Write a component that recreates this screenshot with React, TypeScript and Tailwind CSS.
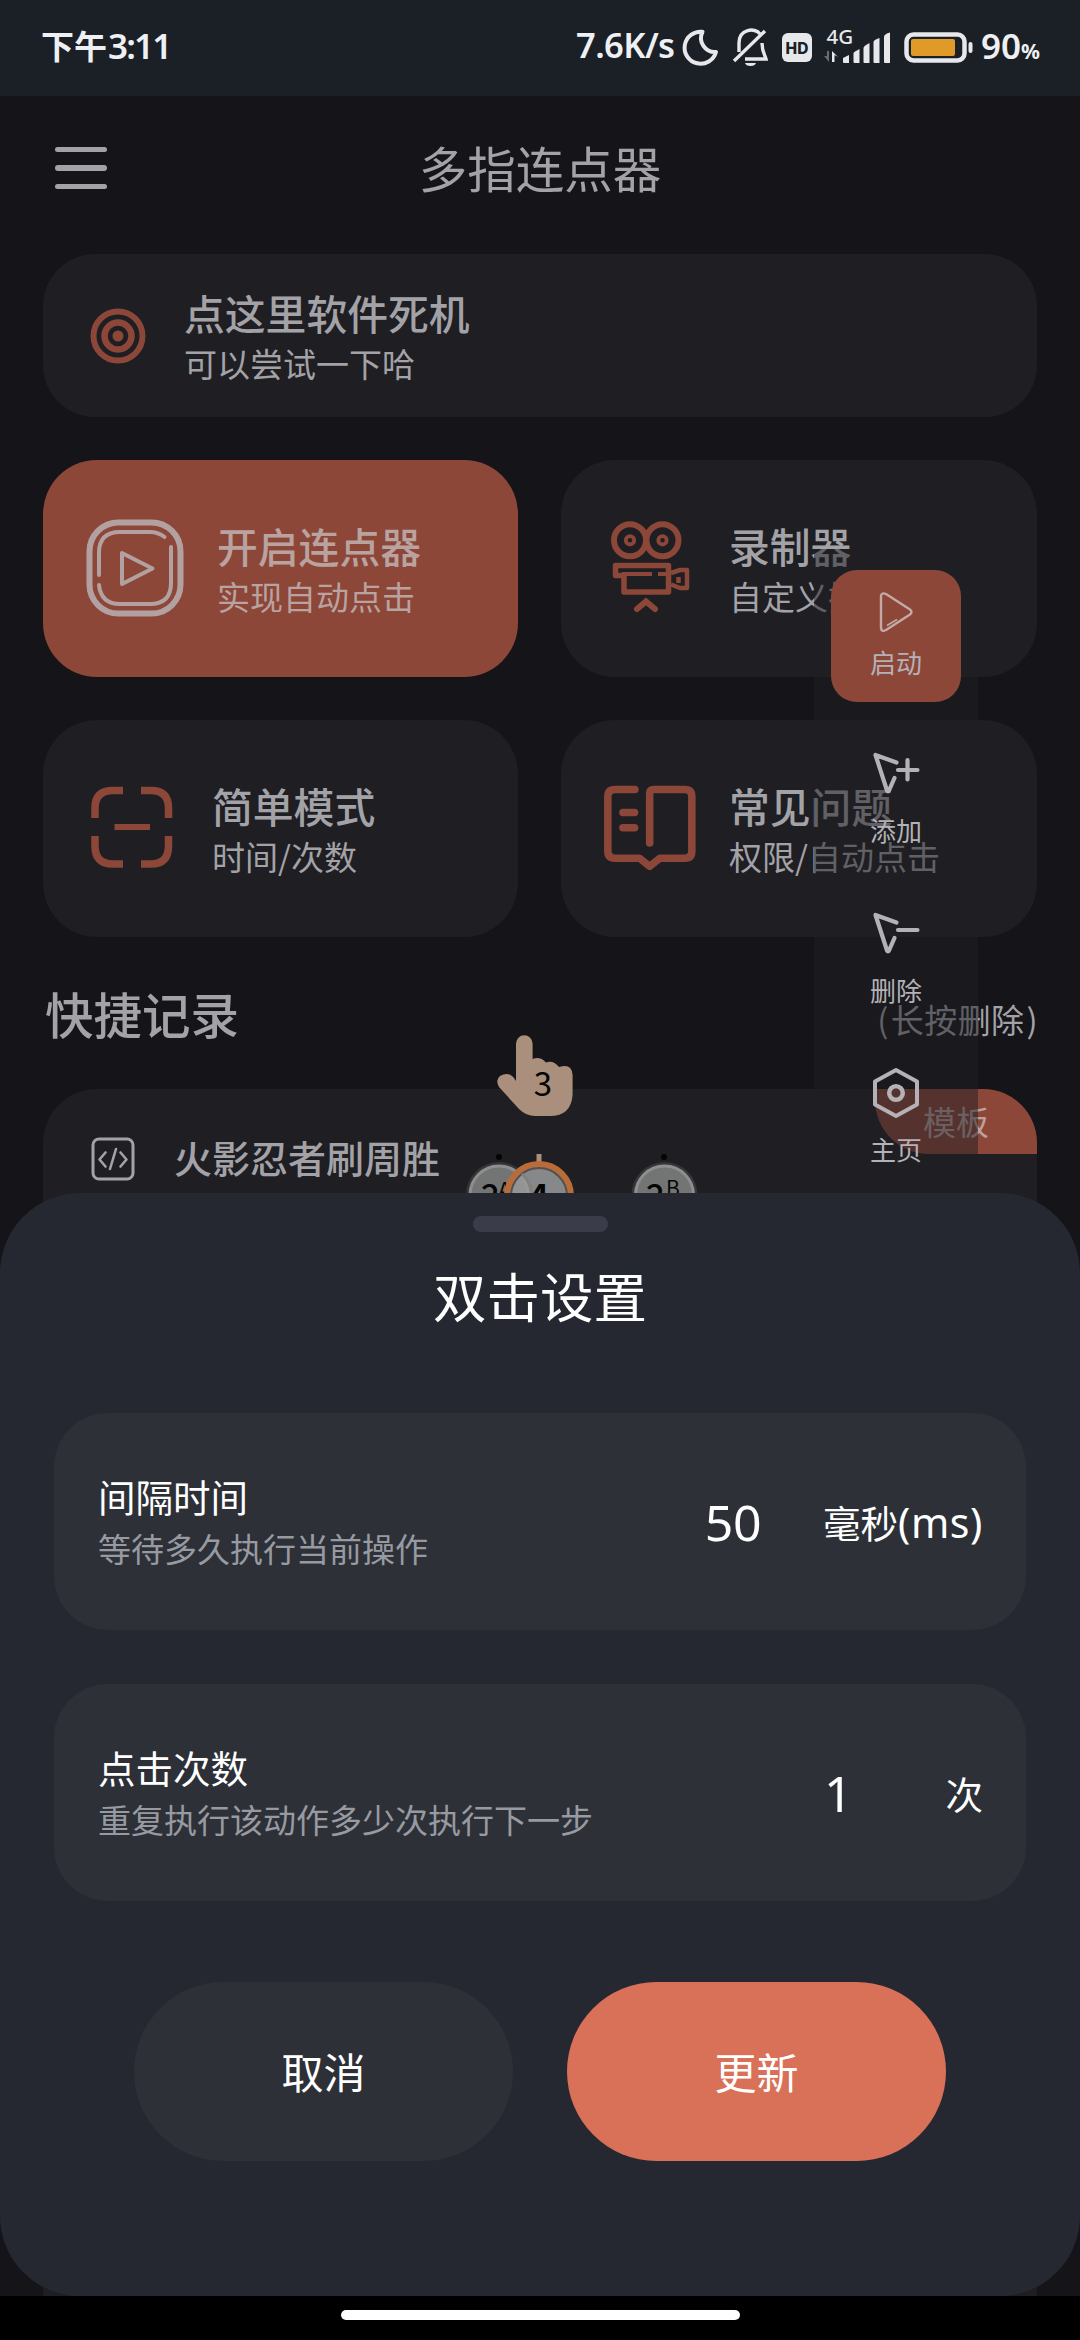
import React from "react";

const ACCENT = "#8c4739";
const MUTED = "#a3a2a7";

function StatusBar() {
  return (
    <div className="flex h-24 items-center bg-[#1b1f26] pl-[41px] text-[#eef0f3]">
      <div className="-mt-[6px] flex h-[50px] w-[535px] items-center text-[33px] leading-none">
        <span className="font-bold">下午</span>
        <span className="ml-px font-['Noto_Sans'] text-[35px] font-semibold tracking-[-1.8px]">3:11</span>
      </div>
      <div className="-mt-[6px] w-[102px] font-['Noto_Sans'] text-[34.5px] leading-none font-semibold tracking-[-0.6px] whitespace-nowrap">7.6K/s</div>
      <svg className="-mt-[3px] h-[60px] w-[300px] shrink-0" viewBox="678 15 300 60" fill="none" stroke="#e6e8eb" strokeWidth="4">
        <path d="M702.500 29.800A16 16 0 1 0 716 50A14 14 0 0 1 702.500 29.800Z" strokeLinejoin="round" />
        <g strokeWidth="3.400">
          <path d="M734 59L765 29" />
          <path d="M739 50V41C739 27 755 25 760 32" />
          <path d="M762 41C762 50 765 53 766 57H745" />
        </g>
        <path d="M745 61H756Q755 64 750.500 64Q746 64 745 61Z" fill="#e6e8eb" stroke="none" />
        <rect x="782" y="31" width="30" height="29" rx="6" fill="#e6e8eb" stroke="none" />
        <text x="797" y="51.500" fill="#1b1f26" stroke="none" fontFamily="Inter" fontWeight="800" fontSize="15.500" textAnchor="middle">HD</text>
        <text x="826.500" y="41.500" fill="#e6e8eb" stroke="none" fontFamily="Noto Sans" fontWeight="500" fontSize="20.500">4G</text>
        <g fill="#e6e8eb" stroke="none">
          <path d="M824 54L829 60V49H827V54Z" fill="#686b70" />
          <path d="M832 49V60H834.500V53L838 55Z" />
          <path d="M843 56L849 53V61H844Q843 61 843 60Z" />
          <path d="M853.500 51Q853.500 50 859.500 47V61H854.500Q853.500 61 853.500 60Z" />
          <path d="M863.500 46Q863.500 44 869.500 41V61H864.500Q863.500 61 863.500 60Z" />
          <path d="M873.500 40Q873.500 38 879.500 36V61H874.500Q873.500 61 873.500 60Z" />
          <path d="M884 35Q884 32 890 30.500V61H885Q884 61 884 60Z" />
        </g>
        <rect x="906.500" y="32.500" width="58" height="26" rx="7" strokeWidth="4.500" />
        <rect x="911" y="37" width="44" height="17" rx="2" fill="#df9a27" stroke="none" />
        <path d="M970.500 42V49" strokeWidth="4" strokeLinecap="round" />
      </svg>
      <div className="-mt-[6px] ml-[3px] flex items-baseline font-['Noto_Sans'] text-[35px] leading-none font-semibold">
        90<span className="text-[21px] font-bold">%</span>
      </div>
    </div>
  );
}

function TwoLine({ title, sub }: { title: string; sub: string }) {
  return (
    <div className="flex flex-col pt-[4px] whitespace-nowrap">
      <span className="h-[50px] text-[40.8px] leading-[50px] font-medium">{title}</span>
      <span className="h-[50px] text-[33px] leading-[50px]">{sub}</span>
    </div>
  );
}

function TargetIcon() {
  return (
    <svg className="h-14 w-14" viewBox="-28 -28 56 56" fill="none" stroke={ACCENT} strokeWidth="6">
      <circle r="24.500" />
      <circle r="13.500" strokeWidth="6.500" />
      <circle r="5.500" fill={ACCENT} stroke="none" />
    </svg>
  );
}

function PlayBoxIcon() {
  return (
    <svg className="-mt-px h-[98px] w-[98px]" viewBox="86 519 98 98" fill="none" stroke="#b3a0a0" strokeLinecap="round">
      <rect x="89.500" y="522.500" width="91" height="91" rx="29" strokeWidth="6" />
      <path d="M99 575V553Q99 532 120 532H150Q158 532 164.500 537M171 547V583Q171 604 150 604H120Q101 604 99 585" strokeWidth="4" />
      <path d="M122 553V584L152.500 568.500Z" strokeWidth="4" strokeLinejoin="round" />
    </svg>
  );
}

function CameraIcon() {
  return (
    <svg className="-mt-px h-[98px] w-[82px]" viewBox="608 521 82 98" fill="none" stroke={ACCENT} strokeWidth="6">
      <circle cx="630" cy="542.300" r="16" />
      <circle cx="662.500" cy="542.300" r="16" />
      <circle cx="630" cy="542.300" r="4.200" strokeWidth="3.800" />
      <circle cx="662.500" cy="542.300" r="4.200" strokeWidth="3.800" />
      <path d="M615.500 567.500H668.500V594H624V577.500H615.500Z" strokeWidth="5.500" strokeLinejoin="round" />
      <path d="M622 576H652M658 576H668" strokeWidth="4" />
      <path d="M671 575L680 572H687V590H680L671 586.500M678.500 579V585" strokeWidth="4.500" strokeLinejoin="round" />
      <path d="M637 611L646 603.500L655 611" strokeLinecap="round" />
    </svg>
  );
}

function ScanIcon() {
  return (
    <svg className="-mt-[3px] h-[82px] w-[82px]" viewBox="0 0 82 82" fill="none" stroke={ACCENT} strokeWidth="7.500">
      <path d="M4 32V22Q4 4.500 22 4.500H32M50 4.500H60Q77.500 4.500 77.500 22V32M77.500 50V60Q77.500 78 60 78H50M32 78H22Q4 78 4 60V50" />
      <path d="M23.500 41H59" strokeWidth="6" />
    </svg>
  );
}

function BookIcon() {
  return (
    <svg className="-mt-px h-[88px] w-[96px]" viewBox="180 244 280 256" fill="none" stroke={ACCENT} strokeWidth="22" strokeLinecap="round" strokeLinejoin="round">
      <path d="M276 260H218Q197 260 197 281V440Q197 460 218 460H289L319 484L349 460H422Q442 460 442 440V281Q442 260 422 260H331Q319 260 319 272V416" />
      <path d="M241 327H275M241 371H275" />
    </svg>
  );
}

function CodeIcon() {
  return (
    <svg className="h-11 w-11" viewBox="0 0 44 44" fill="none" stroke={MUTED} strokeWidth="3" strokeLinecap="round" strokeLinejoin="round">
      <rect x="2" y="2" width="40" height="40" rx="6" />
      <path d="M14.500 15.500L8.500 22.500L14.500 29.500M29.500 15.500L35.500 22.500L29.500 29.500M25 12L19 32" strokeWidth="2.600" />
    </svg>
  );
}

function CursorIcon({ plus }: { plus?: boolean }) {
  return (
    <svg className="h-11 w-12" viewBox="0 0 48 44" fill="none" stroke="#b4b2b6" strokeWidth="4.200" strokeLinecap="round" strokeLinejoin="round">
      <path d="M24.500 11.500L3.500 4L15 39.500Q16 41.500 17 39.500L22.500 27" />
      <path d={plus ? "M26 19H45.500M35.500 9V28.500" : "M26 19H45.500"} />
    </svg>
  );
}

function Card({ left, className, children }: { left?: boolean; className?: string; children: React.ReactNode }) {
  return (
    <div className={`flex h-[217px] items-center rounded-[54px] ${left ? "w-[475px]" : "w-[476px]"} ${className ?? "bg-[#1e1e23]"}`}>
      {children}
    </div>
  );
}

function FloatingPanel() {
  return (
    <div className="absolute top-[549px] left-[814px] flex h-[660px] w-[164px] flex-col items-center bg-[#1e1e23]/50 pt-[21px] text-[26px] leading-[30px] text-[#b4b2b6]">
      <div className="flex h-[132px] w-[130px] flex-col items-center rounded-[26px] bg-[#8c4739] pt-[21px]">
        <svg className="h-[42px] w-9" viewBox="0 0 36 42" fill="none" stroke="#c3aaa5" strokeWidth="2.400" strokeLinejoin="round">
          <path d="M3 5V37Q3.500 41.500 8 39L32 23.500Q35 21 32 18.500L8 3Q3.500 1 3 5Z" />
          <path d="M9 34.500L19 28.500" strokeWidth="1.500" />
        </svg>
        <span className="mt-[14px]">启动</span>
      </div>
      <div className="mt-[49px] flex flex-col items-center">
        <CursorIcon plus />
        <span className="mt-[20px]">添加</span>
      </div>
      <div className="mt-[66px] flex flex-col items-center">
        <CursorIcon />
        <span className="mt-[20px]">删除</span>
      </div>
      <div className="mt-[62px] flex flex-col items-center">
        <svg className="h-[52px] w-12" viewBox="0 0 48 52" fill="none" stroke="#b4b2b6" strokeWidth="4" strokeLinejoin="round">
          <path d="M24 3L45 14.500V37.500L24 49L3 37.500V14.500Z" />
          <circle cx="24" cy="26" r="6.800" strokeWidth="4.500" />
        </svg>
        <span className="mt-[15px]">主页</span>
      </div>
    </div>
  );
}

function Markers() {
  return (
    <svg className="absolute top-[1020px] left-[450px] h-[180px] w-[260px]" viewBox="450 1020 260 180" fontFamily="Noto Sans CJK SC, sans-serif" fill="#050505">
      <path
        d="M516 1081V1043.500A8.300 8.300 0 0 1 532.600 1043.500V1059Q540 1056 546 1062.500Q553 1059.500 559 1067Q572 1063 572.600 1075V1095Q571 1116 550 1116H535Q526 1116 519 1109L499 1087Q495 1080 500 1076Q510 1070 516 1081Z"
        fill="#a98f7c"
      />
      <text x="543" y="1096" fontSize="33" textAnchor="middle">3</text>
      <circle cx="499" cy="1157" r="3" />
      <circle cx="499" cy="1195" r="33" fill="#35363a" />
      <circle cx="499" cy="1195" r="29" fill="#737574" stroke="#8d8f8f" strokeWidth="3" />
      <text x="481" y="1208" fontSize="33" fontWeight="500">2</text>
      <text x="498" y="1198" fontSize="22">A</text>
      <path d="M539 1154V1162" stroke="#a98f7c" strokeWidth="5" />
      <circle cx="539" cy="1196" r="32" fill="#999b9b" fillOpacity=".85" stroke="#b96c37" strokeWidth="6" />
      <circle cx="539" cy="1196" r="28" fill="none" stroke="#55504d" strokeWidth="2" />
      <path d="M522 1174Q530 1181 532 1193" fill="none" stroke="#808282" strokeWidth="3" />
      <text x="539" y="1208" fontSize="33" fontWeight="700" textAnchor="middle">4</text>
      <circle cx="664" cy="1157" r="3" />
      <circle cx="664.500" cy="1195" r="33" fill="#35363a" />
      <circle cx="664.500" cy="1195" r="29" fill="#737574" stroke="#8d8f8f" strokeWidth="3" />
      <text x="646" y="1208" fontSize="33" fontWeight="500">2</text>
      <text x="666" y="1196" fontSize="21">B</text>
    </svg>
  );
}

function SettingRow({ title, sub, value, unit, suffix, valueClass }: { title: string; sub: string; value: string; unit: string; suffix?: string; valueClass: string }) {
  return (
    <div className="flex h-[217px] items-center rounded-[54px] bg-[#2d3037] px-11 whitespace-nowrap">
      <div className="mt-px flex flex-col">
        <span className="h-[53px] text-[37.5px] leading-[53px]">{title}</span>
        <span className="h-[53px] text-[33px] leading-[53px] text-[#979aa1]">{sub}</span>
      </div>
      <span className={`ml-auto text-center font-['Noto_Sans'] text-[50px] leading-[60px] ${valueClass}`}>{value}</span>
      <div className="-mr-px flex items-baseline text-[37.5px] leading-[60px]">
        {unit}
        {suffix && <span className="font-['Noto_Sans'] text-[41px] tracking-[0.6px]">{suffix}</span>}
      </div>
    </div>
  );
}

function SettingsSheet() {
  return (
    <div className="absolute top-[1193px] left-0 flex h-[1103px] w-[1080px] flex-col items-center rounded-[80px] bg-[#252831] pt-[23px] text-white">
      <div className="h-4 w-[135px] rounded-lg bg-[#3b3c49]" />
      <h2 className="mt-[31px] text-[53.5px] leading-[64px]">双击设置</h2>
      <div className="mt-[86px] flex w-[972px] flex-col gap-[54px]">
        <SettingRow title="间隔时间" sub="等待多久执行当前操作" value="50" unit="毫秒" suffix="(ms)" valueClass="mr-[62px] tracking-[-0.5px]" />
        <SettingRow title="点击次数" sub="重复执行该动作多少次执行下一步" value="1" unit="次" valueClass="mr-[93px]" />
      </div>
      <div className="mt-[81px] flex gap-[54px] text-[42px]">
        <button className="h-[179px] w-[379px] rounded-full bg-[#2d3037] pb-[2px]">取消</button>
        <button className="h-[179px] w-[379px] rounded-full bg-[#d97058] pb-[2px]">更新</button>
      </div>
    </div>
  );
}

export default function App() {
  return (
    <div className="relative flex h-[2340px] w-[1080px] flex-col overflow-hidden bg-[#141419] font-['Noto_Sans_CJK_SC',sans-serif] text-[#a3a2a7] antialiased">
      <StatusBar />
      <header className="flex h-[158px] items-center pb-[14px]">
        <div className="ml-[55px] flex w-[52px] flex-col gap-[13px]">
          <i className="h-[5.5px] rounded-full bg-[#a3a2a7]" />
          <i className="h-[5.5px] rounded-full bg-[#a3a2a7]" />
          <i className="h-[5.5px] rounded-full bg-[#a3a2a7]" />
        </div>
        <h1 className="mr-[107px] flex-1 pb-[2px] text-center text-[48.5px] leading-[60px]">多指连点器</h1>
      </header>
      <main className="flex flex-col px-[43px]">
        <div className="flex h-[163px] items-center rounded-[52px] bg-[#1e1e23] pl-[47px]">
          <TargetIcon />
          <div className="ml-[38px]">
            <TwoLine title="点这里软件死机" sub="可以尝试一下哈" />
          </div>
        </div>
        <div className="mt-[43px] grid grid-cols-[475px_476px] gap-[43px]">
          <Card left className="bg-[#8c4739] text-[#b9a29f]">
            <div className="ml-[43px] w-[131px]"><PlayBoxIcon /></div>
            <TwoLine title="开启连点器" sub="实现自动点击" />
          </Card>
          <Card>
            <div className="ml-[47px] w-[121px]"><CameraIcon /></div>
            <TwoLine title="录制器" sub="自定义操作" />
          </Card>
          <Card left>
            <div className="ml-12 w-[121px]"><ScanIcon /></div>
            <TwoLine title="简单模式" sub="时间/次数" />
          </Card>
          <Card>
            <div className="ml-[41px] w-[127px]"><BookIcon /></div>
            <TwoLine title="常见问题" sub="权限/自动点击" />
          </Card>
        </div>
        <div className="flex h-[152px] items-center justify-between">
          <h2 className="pl-[2px] text-[48.5px] leading-[60px] font-medium">快捷记录</h2>
          <span className="mt-[14px] -mr-px text-[33px] tracking-[0.4px]">
            <span className="mr-[2px]">(</span>长按删除<span className="ml-[2px]">)</span>
          </span>
        </div>
        <div className="flex h-[1207px] items-start rounded-t-[54px] bg-[#1e1e23]">
          <div className="mt-12 ml-12"><CodeIcon /></div>
          <span className="mt-[38px] ml-[39px] text-[38px] leading-[60px] font-medium">火影忍者刷周胜</span>
          <div className="ml-auto flex h-[65px] w-[162px] items-center justify-center rounded-tr-[54px] rounded-bl-[54px] bg-[#8c4739] text-[33px] text-[#b9a29f]">模板</div>
        </div>
      </main>
      <FloatingPanel />
      <Markers />
      <SettingsSheet />
      <footer className="absolute bottom-0 left-0 flex h-11 w-full justify-center bg-black pt-[14px]">
        <div className="h-[10px] w-[399px] rounded-full bg-white" />
      </footer>
    </div>
  );
}
